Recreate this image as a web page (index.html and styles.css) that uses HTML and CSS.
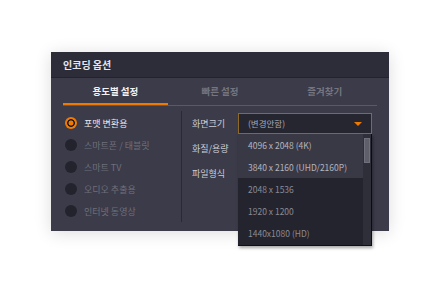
FILE: index.html
```html
<!DOCTYPE html>
<html>
<head lang="ko">
    <meta charset="UTF-8">
    <title>인코딩 옵션</title>
    <link rel="stylesheet" href="styles.css">
</head>
<body>
<div id="win">
    <div class="title">인코딩 옵션</div>
    <ul id="tabs">
        <li class="active">용도별 설정</li>
        <li>빠른 설정</li>
        <li>즐겨찾기</li>
    </ul>
    <div class="main">
        <ul class="presets">
            <li class="on"><span class="radio"></span>포맷 변환용</li>
            <li><span class="radio"></span>스마트폰 / 태블릿</li>
            <li><span class="radio"></span>스마트 TV</li>
            <li><span class="radio"></span>오디오 추출용</li>
            <li><span class="radio"></span>인터넷 동영상</li>
        </ul>
        <div class="opts">
            <div class="row">
                <span class="label">화면크기</span>
                <div class="select">(변경안함)<span class="arrow"></span></div>
            </div>
            <div class="row"><span class="label">화질/용량</span></div>
            <div class="row"><span class="label">파일형식</span></div>

            <div class="drop">
                <ul>
                    <li class="hi">4096 x 2048 (4K)</li>
                    <li class="hi">3840 x 2160 (UHD/2160P)</li>
                    <li>2048 x 1536</li>
                    <li>1920 x 1200</li>
                    <li>1440x1080 (HD)</li>
                </ul>
                <div class="scroll"><div class="thumb"></div></div>
            </div>
        </div>
    </div>
</div>
</body>
</html>
```

FILE: styles.css
```css
*{padding: 0;margin: 0;list-style: none;box-sizing: border-box;}
html{height: 100%;}
body{min-height: 100%;padding: 52px 0 0 51px;background: #fff;font: 9px "Noto Sans CJK KR", "Noto Sans", sans-serif;}
#win{position: relative;width: 338px;height: 179px;background: #3b3b4a;box-shadow: 0 2px 16px rgba(0,0,0,.14);}
.title{height: 26px;line-height: 26px;padding-left: 12px;background: #2d2d39;border-bottom: 1px solid #23232d;color: #e6e6ec;font-weight: bold;font-size: 10px;}
#tabs{display: flex;margin: 0 12px;height: 28px;border-bottom: 1px solid #5a5a66;}
#tabs li{flex: 1;text-align: center;line-height: 27px;color: #75757f;font-weight: bold;font-size: 9.5px;}
#tabs .active{color: #f2f2f4;border-bottom: 2px solid #f07a00;}
.main{display: flex;margin: 0 12px;padding-top: 5px;}
.presets{width: 119px;height: 111px;border-right: 1px solid #2a2a35;padding-top: 1px;}
.presets li{height: 22px;display: flex;align-items: center;color: #6f6f79;}
.presets .on{color: #e8e8ee;}
.radio{width: 12px;height: 12px;border-radius: 50%;background: #23232e;margin: 0 7px 0 2px;}
.on .radio{background: radial-gradient(circle, #f07a00 0 2.2px, #1e1e24 2.8px 3.6px, #f07a00 4.2px);}
.opts{position: relative;flex: 1;padding: 0 0 0 10px;}
.row{display: flex;align-items: center;height: 25px;color: #cdcdd4;}
.label{width: 46px;}
.select{position: relative;width: 134px;height: 21px;line-height: 19px;padding-left: 9px;border: 1px solid #8e6a2a;background: #262631;color: #a8a8b2;font-size: 8.5px;}
.arrow{position: absolute;right: 9px;top: 8px;border: 4px solid transparent;border-top: 4px solid #f07a00;border-bottom: 0;}
.drop{position: absolute;left: 56px;top: 23px;width: 134px;height: 112px;background: #24242e;border-right: 1px solid #0c0c10;border-bottom: 1px solid #101014;box-shadow: 1px 2px 3px rgba(0,0,0,.35);display: flex;z-index: 2;}
.drop ul{flex: 1;}
.drop li{height: 22px;line-height: 22px;padding-left: 10px;color: #8a8a94;font-size: 8.5px;white-space: nowrap;}
.drop .hi{background: #393946;color: #b4b4be;}
.scroll{width: 8px;background: #2f2f3a;padding: 4px 1px;}
.thumb{height: 25px;background: #5f5f6c;border: 1px solid #70707c;}
```
